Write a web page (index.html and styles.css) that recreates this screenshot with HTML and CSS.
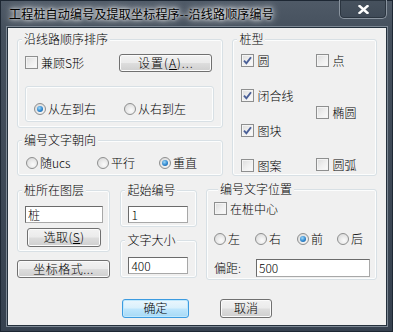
FILE: index.html
```html
<!DOCTYPE html>
<html lang="zh-CN">
<head>
    <meta charset="UTF-8">
    <meta name="viewport" content="width=device-width, initial-scale=1.0">
    <title>工程桩自动编号</title>
    <link rel="stylesheet" href="styles.css">
</head>
<body>

    <div class="window">
        <div class="titlebar">
            <span class="title">工程桩自动编号及提取坐标程序--沿线路顺序编号</span>
            <span class="close">
                <svg width="11" height="9" viewBox="0 0 11 9"><path d="M1.5 1 L9.5 8 M9.5 1 L1.5 8" stroke="#fff" stroke-width="2.4" stroke-linecap="square"/></svg>
            </span>
        </div>

        <div class="client">
            <div class="row row-top">
                <div class="col col-left">
                    <div class="group g-order">
                        <div class="group-title">沿线路顺序排序</div>
                        <div class="order-line">
                            <label class="check"><span class="box"></span>兼顾S形</label>
                            <button class="btn btn-set">设置(<u>A</u>)...</button>
                        </div>
                        <div class="inner-box">
                            <label class="radio w90 on"><span class="dot"></span>从左到右</label>
                            <label class="radio"><span class="dot"></span>从右到左</label>
                        </div>
                    </div>

                    <div class="group g-dir">
                        <div class="group-title">编号文字朝向</div>
                        <div class="radio-line">
                            <label class="radio w71"><span class="dot"></span>随ucs</label>
                            <label class="radio w62"><span class="dot"></span>平行</label>
                            <label class="radio on"><span class="dot"></span>重直</label>
                        </div>
                    </div>
                </div>

                <div class="group g-type">
                    <div class="group-title">桩型</div>
                    <div class="type-cols">
                        <div class="type-col type-a">
                            <label class="check on"><span class="box"></span>圆</label>
                            <label class="check on"><span class="box"></span>闭合线</label>
                            <label class="check on"><span class="box"></span>图块</label>
                            <label class="check"><span class="box"></span>图案</label>
                        </div>
                        <div class="type-col type-b">
                            <label class="check"><span class="box"></span>点</label>
                            <label class="check"><span class="box"></span>椭圆</label>
                            <label class="check"><span class="box"></span>圆弧</label>
                        </div>
                    </div>
                </div>
            </div>

            <div class="row row-mid">
                <div class="col col-layer">
                    <div class="group g-layer">
                        <div class="group-title">桩所在图层</div>
                        <input class="field f-layer" type="text" value="桩">
                        <button class="btn btn-pick">选取(<u>S</u>)</button>
                    </div>
                    <button class="btn btn-format">坐标格式...</button>
                </div>

                <div class="col col-num">
                    <div class="group g-start">
                        <div class="group-title">起始编号</div>
                        <input class="field f-num" type="text" value="1">
                    </div>
                    <div class="group g-size">
                        <div class="group-title">文字大小</div>
                        <input class="field f-num f-size" type="text" value="400">
                    </div>
                </div>

                <div class="group g-pos">
                    <div class="group-title">编号文字位置</div>
                    <label class="check pos-center"><span class="box"></span>在桩中心</label>
                    <div class="radio-line pos-radios">
                        <label class="radio w41"><span class="dot"></span>左</label>
                        <label class="radio w42"><span class="dot"></span>右</label>
                        <label class="radio w40 on"><span class="dot"></span>前</label>
                        <label class="radio"><span class="dot"></span>后</label>
                    </div>
                    <div class="offset-line">
                        <span class="offset-label">偏距:</span>
                        <input class="field f-offset" type="text" value="500">
                    </div>
                </div>
            </div>

            <div class="actions">
                <button class="btn btn-ok">确定</button>
                <button class="btn btn-cancel">取消</button>
            </div>
        </div>
    </div>

</body>
</html>
```

FILE: styles.css
```css
* {
    margin: 0;
    padding: 0;
    box-sizing: border-box;
    font-family: 'Noto Sans CJK SC', 'Liberation Sans', sans-serif;
}

body {
    width: 393px;
    height: 332px;
    overflow: hidden;
    font-size: 12px;
    font-weight: 300;
    line-height: 14px;
    color: #000;
}

.window {
    width: 393px;
    height: 332px;
    display: flex;
    flex-direction: column;
    padding: 0 5px 5px 6px;
    background: linear-gradient(180deg, #4f5a67 0%, #45505d 30px, #36414f 100%);
    border: 1px solid #1d2733;
}

/* title bar */
.titlebar {
    height: 26px;
    display: flex;
    align-items: flex-start;
}

.title {
    margin: 6px 0 0 2px;
    font-size: 12px;
    font-weight: 400;
    letter-spacing: 0.2px;
    color: #000;
    text-shadow: 0 0 6px #fff, 0 0 10px rgba(255, 255, 255, 0.9), 0 0 3px rgba(255, 255, 255, 0.8);
    white-space: nowrap;
}

.close {
    margin-left: auto;
    margin-top: -1px;
    width: 48px;
    height: 19px;
    display: flex;
    align-items: center;
    justify-content: center;
    border: 1px solid #8a949f;
    border-top: none;
    border-radius: 0 0 5px 5px;
    box-shadow: inset 0 0 0 1px #2b3540;
    background: linear-gradient(180deg, #47525e, #3f4a57);
}

/* dialog body */
.client {
    height: 300px;
    background: #f0f0f0;
    border: 1px solid #24303c;
    box-shadow: 0 0 0 1px #7d8894;
    padding: 4px 9px 0 9px;
}

.row {
    display: flex;
}

.row-top {
    gap: 9px;
}

.col {
    display: flex;
    flex-direction: column;
}

.col-left {
    width: 207px;
}

/* group boxes */
.group {
    margin-top: 7px;
    border: 1px solid #d8e0e5;
    border-radius: 3px;
    box-shadow: inset 0 0 0 1px #fcfdfd;
}

.group-title {
    width: fit-content;
    margin: -8px 0 0 4px;
    padding: 0 2px;
    background: #f0f0f0;
    line-height: 14px;
    white-space: nowrap;
}

.g-order {
    padding-bottom: 5px;
}

.order-line {
    display: flex;
    align-items: center;
    margin-top: 8px;
    padding: 0 10px 0 7px;
}

.inner-box {
    display: flex;
    margin: 14px 8px 0 7px;
    padding: 15px 0 5px 8px;
    border: 1px solid #d8e0e5;
    border-radius: 3px;
    box-shadow: inset 0 0 0 1px #fcfdfd;
}

.g-dir {
    margin-top: 12px;
    padding-bottom: 5px;
}

.radio-line {
    display: flex;
    margin-top: 9px;
    padding-left: 8px;
}

.g-type {
    width: 145px;
}

.type-cols {
    display: flex;
    padding: 8px 0 0 8px;
}

.type-col {
    display: flex;
    flex-direction: column;
}

.type-a {
    width: 75px;
    gap: 21px;
}

.type-b {
    gap: 38px;
}

/* checkbox & radio */
.check,
.radio {
    display: flex;
    align-items: center;
    height: 14px;
    white-space: nowrap;
}

.box {
    width: 13px;
    height: 13px;
    margin-right: 3px;
    border: 1px solid #8e8f8f;
    background: linear-gradient(135deg, #dcdcdc 0%, #f0f0f0 55%, #fbfbfb 100%);
    box-shadow: inset 0 0 0 1px #f4f4f4;
    display: flex;
    align-items: center;
    justify-content: center;
}

.check.on .box::after {
    content: "";
    width: 9px;
    height: 9px;
    background: url("data:image/svg+xml,%3Csvg xmlns='http://www.w3.org/2000/svg' width='9' height='9'%3E%3Cpath d='M1 4.6 L3.4 7.3 L8 1.2' fill='none' stroke='%234a5f97' stroke-width='1.9'/%3E%3C/svg%3E") no-repeat;
}

.dot {
    width: 12px;
    height: 12px;
    margin-right: 2px;
    border: 1px solid #8e8f8f;
    border-radius: 50%;
    background: radial-gradient(circle at 60% 65%, #fbfbfb 0%, #e6e6e6 55%, #d2d2d2 100%);
    display: flex;
    align-items: center;
    justify-content: center;
}

.radio.on .dot::after {
    content: "";
    width: 6px;
    height: 6px;
    border-radius: 50%;
    background: radial-gradient(circle at 40% 35%, #9fd8f7 0%, #2f87cf 55%, #14518f 100%);
}

.w90 { width: 90px; }
.w71 { width: 71px; }
.w62 { width: 62px; }
.w41 { width: 41px; }
.w42 { width: 42px; }
.w40 { width: 40px; }

/* buttons */
.btn {
    font-size: 12px;
    font-weight: 300;
    line-height: 14px;
    color: #000;
    border: 1px solid #707070;
    border-radius: 3px;
    background: linear-gradient(180deg, #f2f2f2 0%, #ebebeb 48%, #dddddd 52%, #cfcfcf 100%);
    box-shadow: inset 0 0 0 1px #fbfbfb;
    cursor: pointer;
}

.btn u {
    text-underline-offset: 1px;
}

.btn-set {
    margin-left: auto;
    width: 93px;
    height: 18px;
    letter-spacing: 1px;
}

.btn-pick {
    display: block;
    margin: 5px 0 0 9px;
    width: 74px;
    height: 19px;
    letter-spacing: 0.5px;
}

.btn-format {
    margin-top: 8px;
    width: 93px;
    height: 18px;
    letter-spacing: 0.5px;
}

.actions {
    display: flex;
    justify-content: center;
    gap: 31px;
    margin-top: 19px;
}

.btn-ok {
    width: 67px;
    height: 19px;
    border-color: #3c9be0;
    background: linear-gradient(180deg, #eaf6fd 0%, #d9f0fc 48%, #bee6fd 52%, #a7d9f5 100%);
    box-shadow: inset 0 0 0 1px #bfe8fd;
}

.btn-cancel {
    width: 52px;
    height: 19px;
}

/* inputs */
.field {
    display: block;
    height: 17px;
    padding: 0 2px;
    font-size: 12px;
    font-weight: 300;
    color: #000;
    background: #fff;
    border: 1px solid #7a7a7a;
    border-color: #6b6b6b #a8a8a8 #a8a8a8 #6b6b6b;
    outline: none;
}

/* lower row */
.row-mid {
    margin-top: 7px;
}

.col-layer {
    width: 94px;
}

.g-layer {
    padding-bottom: 4px;
}

.f-layer {
    margin: 9px 0 0 7px;
    width: 78px;
}

.col-num {
    width: 77px;
    margin-left: 10px;
}

.g-start {
    padding-bottom: 3px;
}

.f-num {
    margin: 9px 0 0 7px;
    width: 60px;
}

.g-size {
    margin-top: 13px;
    padding-bottom: 3px;
}

.f-size {
    margin-top: 10px;
}

.g-pos {
    width: 172px;
    margin: 6px 0 0 9px;
    padding: 0 0 2px 7px;
}

.pos-center {
    margin-top: 6px;
}

.pos-radios {
    margin-top: 16px;
    padding-left: 0;
}

.offset-line {
    display: flex;
    align-items: center;
    margin-top: 13px;
}

.offset-label {
    width: 42px;
}

.f-offset {
    width: 114px;
    height: 18px;
}
```
